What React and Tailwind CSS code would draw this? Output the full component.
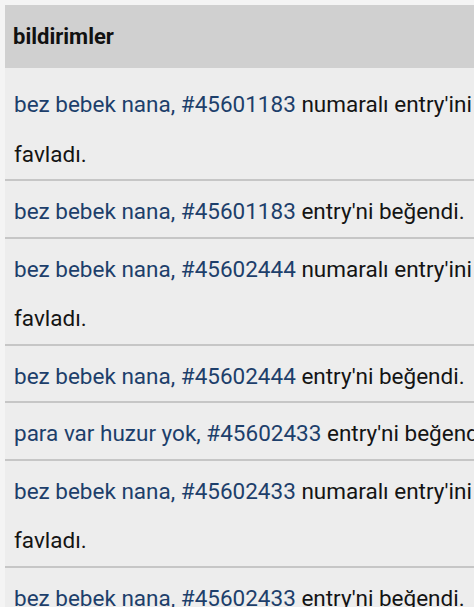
import React from 'react';

const items = [
  { user: 'bez bebek nana', entry: '45601183', action: 'numaralı entry\'ini favladı.' },
  { user: 'bez bebek nana', entry: '45601183', action: 'entry\'ni beğendi.' },
  { user: 'bez bebek nana', entry: '45602444', action: 'numaralı entry\'ini favladı.' },
  { user: 'bez bebek nana', entry: '45602444', action: 'entry\'ni beğendi.' },
  { user: 'para var huzur yok', entry: '45602433', action: 'entry\'ni beğendi.' },
  { user: 'bez bebek nana', entry: '45602433', action: 'numaralı entry\'ini favladı.' },
  { user: 'bez bebek nana', entry: '45602433', action: 'entry\'ni beğendi.' },
];

const App = () => {
  return (
    <div className="w-[474px] h-[607px] overflow-hidden bg-[#f4f4f4] pt-[5px] pl-[5px] font-['Roboto',sans-serif]">
      <div className="w-[515px] bg-[#ededed] min-h-[602px]">
        <div className="h-[63px] bg-[#d0d0d0] flex items-center pl-[8px]">
          <h1 className="text-[22px] font-bold text-[#111]">bildirimler</h1>
        </div>
        <ul className="mt-[6px]">
          {items.map((item, i) => (
            <li key={i} className="pt-[6px] pl-[9px] border-b-2 border-[#c6c6c6] text-[22.5px] leading-[49.5px] text-[#141414]">
              <span className="text-[#1d3f6b]">{item.user}, #{item.entry}</span> {item.action}
            </li>
          ))}
        </ul>
      </div>
    </div>
  );
};

export default App;
